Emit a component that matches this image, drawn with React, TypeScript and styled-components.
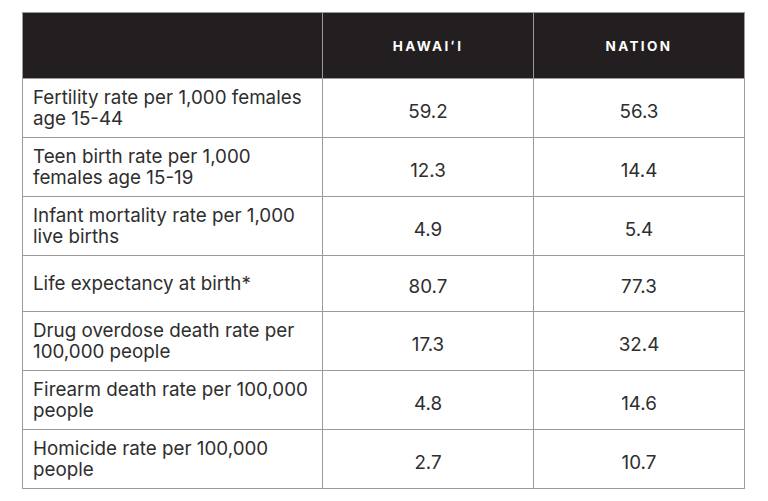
import React from "react";
import styled, { createGlobalStyle } from "styled-components";

const GlobalStyle = createGlobalStyle`
    body {
        margin: 0;
        background: #fff;
        font-family: "Inter", "Liberation Sans", sans-serif;
    }
`;

const Page = styled.div`
    padding: 12px 0 0 22px;
`;

const Table = styled.table`
    width: 722px;
    border-collapse: collapse;
    table-layout: fixed;
    color: #2e2e2e;
`;

const HeadCell = styled.th`
    height: 65px;
    padding: 0;
    background: #231f20;
    color: #fff;
    font-size: 13.5px;
    font-weight: 700;
    letter-spacing: 2.4px;
    text-align: center;
    border: 1px solid #9a9a9a;
`;

const Cell = styled.td<{ $label?: boolean }>`
    height: 39px;
    padding: 8px 10px;
    border: 1px solid #9a9a9a;
    font-size: 18.8px;
    font-weight: 400;
    line-height: 21px;
    text-align: ${(p) => (p.$label ? "left" : "center")};
    vertical-align: middle;
    padding-top: ${(p) => (p.$label ? "8px" : "11px")};
    padding-bottom: ${(p) => (p.$label ? "8px" : "5px")};
`;

const rows = [
    { label: "Fertility rate per 1,000 females age 15-44", hawaii: "59.2", nation: "56.3" },
    { label: "Teen birth rate per 1,000 females age 15-19", hawaii: "12.3", nation: "14.4" },
    { label: "Infant mortality rate per 1,000 live births", hawaii: "4.9", nation: "5.4" },
    { label: "Life expectancy at birth*", hawaii: "80.7", nation: "77.3" },
    { label: "Drug overdose death rate per 100,000 people", hawaii: "17.3", nation: "32.4" },
    { label: "Firearm death rate per 100,000 people", hawaii: "4.8", nation: "14.6" },
    { label: "Homicide rate per 100,000 people", hawaii: "2.7", nation: "10.7" },
];

export default function App() {
    return (
        <>
            <GlobalStyle />
            <Page>
                <Table>
                    <colgroup>
                        <col style={{ width: 300 }} />
                        <col style={{ width: 211 }} />
                        <col style={{ width: 211 }} />
                    </colgroup>
                    <thead>
                        <tr>
                            <HeadCell />
                            <HeadCell>HAWAIʻI</HeadCell>
                            <HeadCell>NATION</HeadCell>
                        </tr>
                    </thead>
                    <tbody>
                        {rows.map((row) => (
                            <tr key={row.label}>
                                <Cell $label>{row.label}</Cell>
                                <Cell>{row.hawaii}</Cell>
                                <Cell>{row.nation}</Cell>
                            </tr>
                        ))}
                    </tbody>
                </Table>
            </Page>
        </>
    );
}
